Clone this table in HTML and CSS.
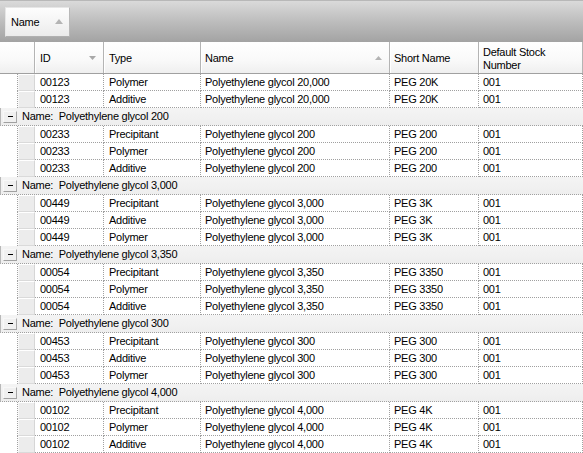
FILE: index.html
```html
<!DOCTYPE html>
<html>
<head>
<meta charset="utf-8">
<link rel="stylesheet" href="styles.css">
</head>
<body>
<div class="grid">
  <div class="group-panel">
    <div class="group-chip">
      <span>Name</span>
      <svg class="sort" width="8" height="5" viewBox="0 0 8 5"><polygon points="0,5 8,5 4,0" fill="#b4b4b4"/></svg>
    </div>
  </div>
  <div class="header row-cols">
    <div class="hcell corner"></div>
    <div class="hcell pad5"><span>ID</span><svg class="hsort" width="7" height="4" viewBox="0 0 7 4"><polygon points="0,0 7,0 3.5,4" fill="#a8a8a8"/></svg></div>
    <div class="hcell pad5">Type</div>
    <div class="hcell"><span>Name</span><svg class="hsort" width="7" height="4" viewBox="0 0 7 4"><polygon points="0,4 7,4 3.5,0" fill="#b4b4b4"/></svg></div>
    <div class="hcell">Short Name</div>
    <div class="hcell two">Default Stock Number</div>
  </div>
  <div class="rows">
    <div class="row row-cols"><div class="indent"></div><div class="ind"></div><div class="c pad5">00123</div><div class="c pad5">Polymer</div><div class="c">Polyethylene glycol 20,000</div><div class="c">PEG 20K</div><div class="c">001</div></div>
    <div class="row row-cols"><div class="indent"></div><div class="ind"></div><div class="c pad5">00123</div><div class="c pad5">Additive</div><div class="c">Polyethylene glycol 20,000</div><div class="c">PEG 20K</div><div class="c">001</div></div>

    <div class="grow"><span class="exp"><i></i></span><span class="gtext">Name:  Polyethylene glycol 200</span></div>
    <div class="row row-cols"><div class="indent"></div><div class="ind"></div><div class="c pad5">00233</div><div class="c pad5">Precipitant</div><div class="c">Polyethylene glycol 200</div><div class="c">PEG 200</div><div class="c">001</div></div>
    <div class="row row-cols"><div class="indent"></div><div class="ind"></div><div class="c pad5">00233</div><div class="c pad5">Polymer</div><div class="c">Polyethylene glycol 200</div><div class="c">PEG 200</div><div class="c">001</div></div>
    <div class="row row-cols"><div class="indent"></div><div class="ind"></div><div class="c pad5">00233</div><div class="c pad5">Additive</div><div class="c">Polyethylene glycol 200</div><div class="c">PEG 200</div><div class="c">001</div></div>

    <div class="grow"><span class="exp"><i></i></span><span class="gtext">Name:  Polyethylene glycol 3,000</span></div>
    <div class="row row-cols"><div class="indent"></div><div class="ind"></div><div class="c pad5">00449</div><div class="c pad5">Precipitant</div><div class="c">Polyethylene glycol 3,000</div><div class="c">PEG 3K</div><div class="c">001</div></div>
    <div class="row row-cols"><div class="indent"></div><div class="ind"></div><div class="c pad5">00449</div><div class="c pad5">Additive</div><div class="c">Polyethylene glycol 3,000</div><div class="c">PEG 3K</div><div class="c">001</div></div>
    <div class="row row-cols"><div class="indent"></div><div class="ind"></div><div class="c pad5">00449</div><div class="c pad5">Polymer</div><div class="c">Polyethylene glycol 3,000</div><div class="c">PEG 3K</div><div class="c">001</div></div>

    <div class="grow"><span class="exp"><i></i></span><span class="gtext">Name:  Polyethylene glycol 3,350</span></div>
    <div class="row row-cols"><div class="indent"></div><div class="ind"></div><div class="c pad5">00054</div><div class="c pad5">Precipitant</div><div class="c">Polyethylene glycol 3,350</div><div class="c">PEG 3350</div><div class="c">001</div></div>
    <div class="row row-cols"><div class="indent"></div><div class="ind"></div><div class="c pad5">00054</div><div class="c pad5">Polymer</div><div class="c">Polyethylene glycol 3,350</div><div class="c">PEG 3350</div><div class="c">001</div></div>
    <div class="row row-cols"><div class="indent"></div><div class="ind"></div><div class="c pad5">00054</div><div class="c pad5">Additive</div><div class="c">Polyethylene glycol 3,350</div><div class="c">PEG 3350</div><div class="c">001</div></div>

    <div class="grow"><span class="exp"><i></i></span><span class="gtext">Name:  Polyethylene glycol 300</span></div>
    <div class="row row-cols"><div class="indent"></div><div class="ind"></div><div class="c pad5">00453</div><div class="c pad5">Precipitant</div><div class="c">Polyethylene glycol 300</div><div class="c">PEG 300</div><div class="c">001</div></div>
    <div class="row row-cols"><div class="indent"></div><div class="ind"></div><div class="c pad5">00453</div><div class="c pad5">Additive</div><div class="c">Polyethylene glycol 300</div><div class="c">PEG 300</div><div class="c">001</div></div>
    <div class="row row-cols"><div class="indent"></div><div class="ind"></div><div class="c pad5">00453</div><div class="c pad5">Polymer</div><div class="c">Polyethylene glycol 300</div><div class="c">PEG 300</div><div class="c">001</div></div>

    <div class="grow"><span class="exp"><i></i></span><span class="gtext">Name:  Polyethylene glycol 4,000</span></div>
    <div class="row row-cols"><div class="indent"></div><div class="ind"></div><div class="c pad5">00102</div><div class="c pad5">Precipitant</div><div class="c">Polyethylene glycol 4,000</div><div class="c">PEG 4K</div><div class="c">001</div></div>
    <div class="row row-cols"><div class="indent"></div><div class="ind"></div><div class="c pad5">00102</div><div class="c pad5">Polymer</div><div class="c">Polyethylene glycol 4,000</div><div class="c">PEG 4K</div><div class="c">001</div></div>
    <div class="row row-cols"><div class="indent"></div><div class="ind"></div><div class="c pad5">00102</div><div class="c pad5">Additive</div><div class="c">Polyethylene glycol 4,000</div><div class="c">PEG 4K</div><div class="c">001</div></div>
  </div>
</div>
</body>
</html>
```

FILE: styles.css
```css
html, body {
  margin: 0;
  padding: 0;
  width: 583px;
  height: 453px;
  overflow: hidden;
  background: #ffffff;
}
.grid {
  width: 583px;
  height: 453px;
  overflow: hidden;
  font-family: "Liberation Sans", Arial, sans-serif;
  font-size: 11px;
  letter-spacing: -0.25px;
  color: #000;
}
.group-panel {
  height: 42px;
  box-sizing: border-box;
  border-top: 1px solid #b8b8b8;
  background: linear-gradient(to bottom, #dadada 0%, #bdbdbd 50%, #a3a3a3 100%);
  padding: 6px 0 0 5px;
}
.group-chip {
  width: 65px;
  height: 30px;
  box-sizing: border-box;
  border: 1px solid #e6e6e6;
  border-right-color: #b8b8b8;
  border-bottom-color: #b0b0b0;
  background: linear-gradient(to bottom, #fdfdfd 0%, #f3f3f3 60%, #ebebeb 100%);
  display: flex;
  align-items: center;
  justify-content: space-between;
  padding: 0 6px 0 5px;
}
.group-chip .sort { margin-top: -2px; }
.row-cols {
  display: grid;
  grid-template-columns: 18px 17px 69px 97px 189px 89px 104px;
}
.header {
  height: 32px;
  box-sizing: border-box;
  border-bottom: 1px solid #a0a0a0;
}
.hcell {
  box-sizing: border-box;
  background: linear-gradient(to bottom, #ffffff 0%, #f9f9f9 60%, #efefef 100%);
  border-right: 1px solid #b4b4b4;
  border-left: 1px solid #ffffff;
  display: flex;
  align-items: center;
  justify-content: space-between;
  padding: 1px 7px 0 3px;
  height: 31px;
}
.hcell.pad5 { padding-left: 4px; }
.hcell.corner { grid-column: 1 / 3; border-left: none; }
.hcell.two { line-height: 13px; padding-right: 14px; padding-top: 2px; }
.hsort { margin-top: -1px; }
.row {
  height: 17px;
}
.indent {
  border-right: 1px dotted #a0a0a0;
  box-sizing: border-box;
  height: 17px;
}
.ind {
  box-sizing: border-box;
  height: 17px;
  background: #ececec;
  border-top: 1px solid #ffffff;
  border-left: 1px solid #f8f8f8;
  border-right: 1px solid #d6d6d6;
  border-bottom: 1px solid #dadada;
}
.c {
  box-sizing: border-box;
  height: 17px;
  border-right: 1px dotted #a0a0a0;
  border-bottom: 1px dotted #a0a0a0;
  padding-left: 4px;
  padding-top: 1px;
  line-height: 15px;
  white-space: nowrap;
  overflow: hidden;
}
.c.pad5 { padding-left: 5px; }
.grow {
  height: 18px;
  box-sizing: border-box;
  border-left: 1px solid #b8b8b8;
  border-bottom: 1px dotted #a0a0a0;
  background: linear-gradient(to bottom, #f4f4f4 0%, #eeeeee 100%);
  display: flex;
  align-items: center;
  padding-left: 2px;
}
.exp {
  width: 14px;
  height: 12px;
  box-sizing: border-box;
  border: 1px solid #f8f8f8;
  border-right-color: #a8a8a8;
  border-bottom-color: #a0a0a0;
  background: #f0f0f0;
  display: flex;
  align-items: center;
  justify-content: center;
}
.exp i {
  display: block;
  width: 5px;
  height: 1px;
  background: #000;
}
.gtext {
  white-space: pre;
  margin-left: 5px;
  line-height: 17px;
}
```
